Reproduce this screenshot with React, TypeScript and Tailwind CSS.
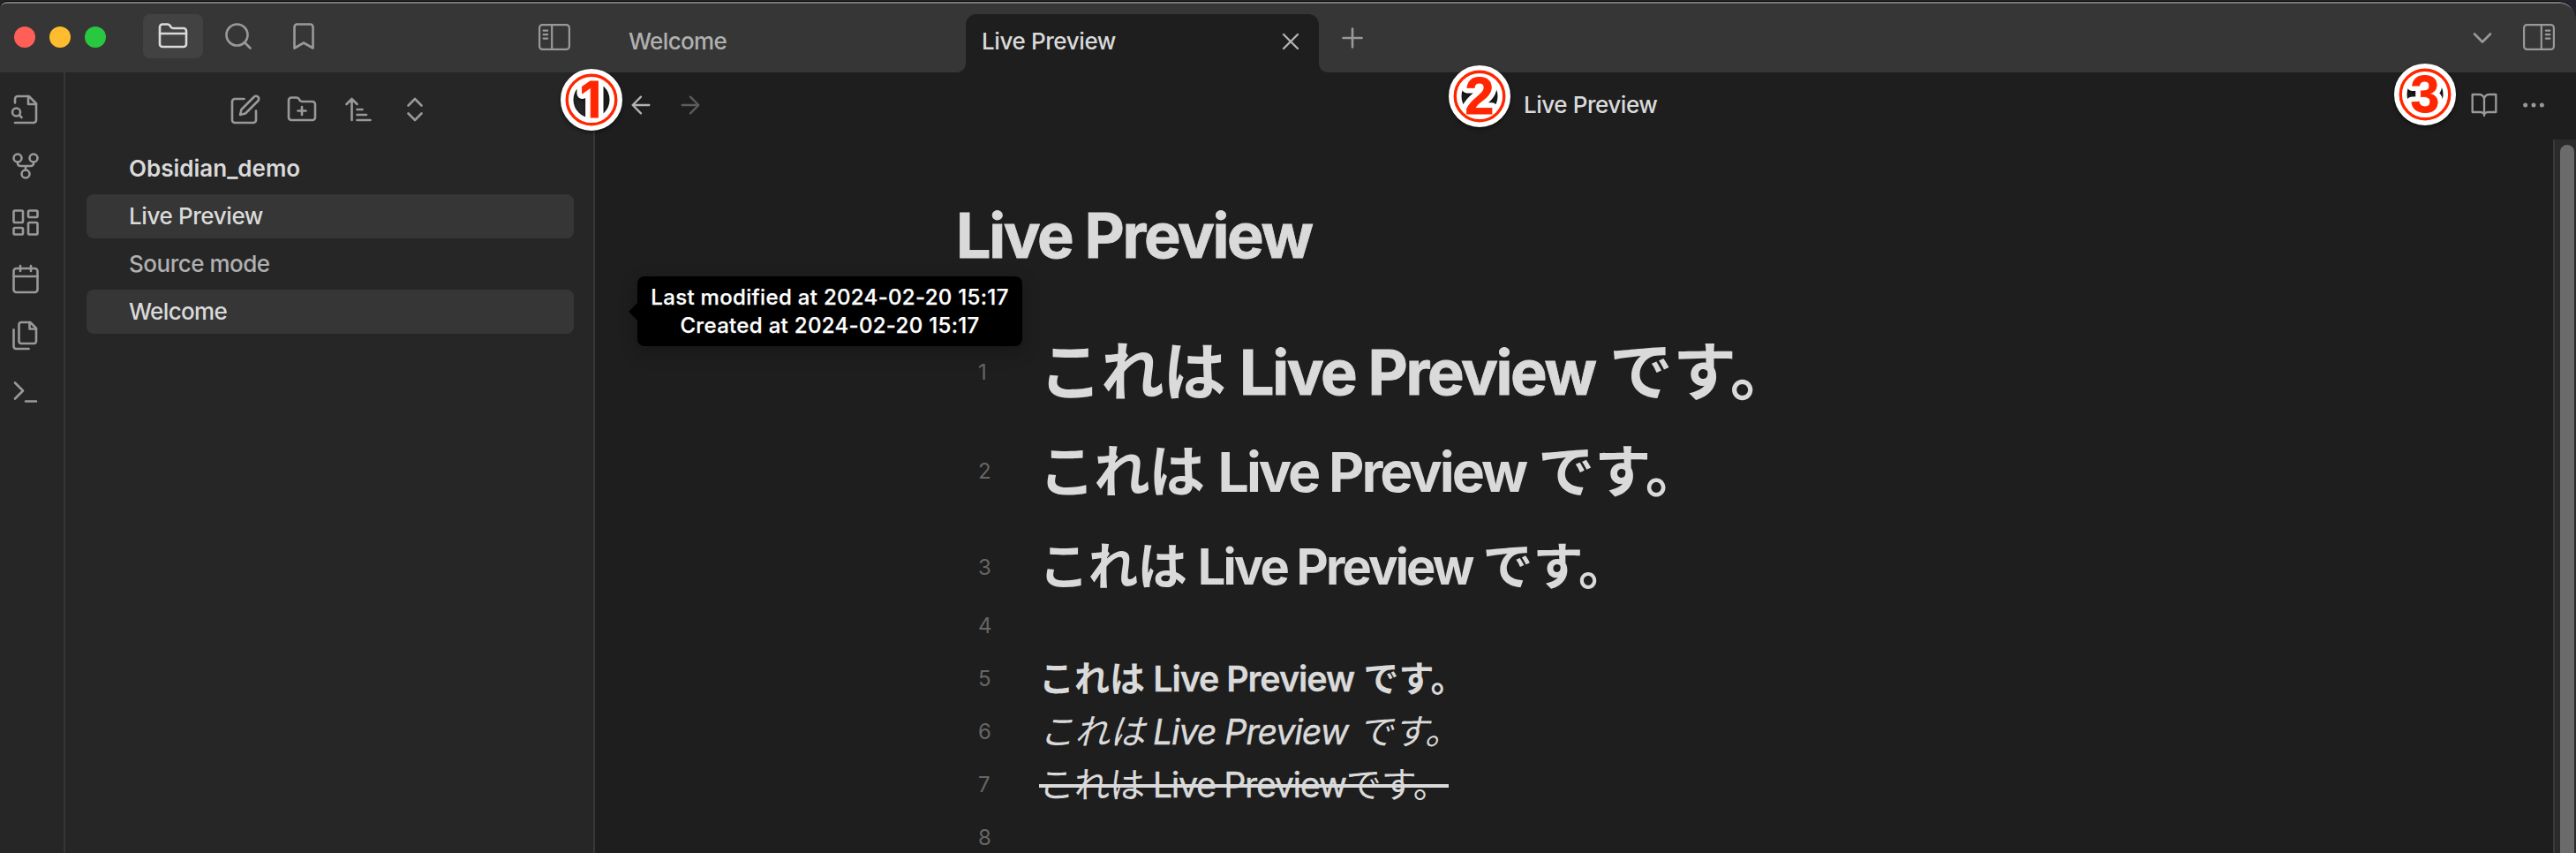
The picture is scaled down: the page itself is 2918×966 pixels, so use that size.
import React from "react";

type IconProps = { size?: number; className?: string; children: React.ReactNode };

function Icon({ size = 36, className = "", children }: IconProps) {
  return (
    <svg
      width={size}
      height={size}
      viewBox="0 0 24 24"
      fill="none"
      stroke="currentColor"
      strokeWidth={1.75}
      strokeLinecap="round"
      strokeLinejoin="round"
      className={`shrink-0 ${className}`}
    >
      {children}
    </svg>
  );
}

const folderPath =
  "M4 20h16a2 2 0 0 0 2-2V8a2 2 0 0 0-2-2h-7.93a2 2 0 0 1-1.66-.9l-.82-1.2A2 2 0 0 0 7.93 3H4a2 2 0 0 0-2 2v13c0 1.1.9 2 2 2Z";

function SidebarToggle({ flipped = false }: { flipped?: boolean }) {
  return (
    <svg
      width="36"
      height="30"
      viewBox="0 0 36 30"
      fill="none"
      stroke="currentColor"
      strokeWidth="2.2"
      strokeLinecap="round"
      className={flipped ? "shrink-0 -scale-x-100" : "shrink-0"}
    >
      <rect x="1.1" y="1.1" width="33.8" height="27.8" rx="3.4" />
      <path d="M15.2 1.5v27" strokeLinecap="butt" />
      <path d="M5.6 7.6h4.6M5.6 12.1h4.6M5.6 16.6h4.6" />
    </svg>
  );
}

function TopBar() {
  return (
    <header className="flex h-[78px] shrink-0 bg-[#363636] text-[#999999]">
      <div className="flex h-[74px] w-[674px] shrink-0 items-center pl-4">
        <div className="mt-[2px] flex gap-4">
          <span className="size-6 rounded-full bg-[#ff5f57]" />
          <span className="size-6 rounded-full bg-[#febc2e]" />
          <span className="size-6 rounded-full bg-[#28c840]" />
        </div>
        <div className="ml-[42px] flex gap-[6px]">
          <button className="flex h-[50px] w-[68px] items-center justify-center rounded-[8px] bg-[#424242] text-[#dadada]">
            <Icon>
              <path d={folderPath} />
              <path d="M2 10h20" />
            </Icon>
          </button>
          <button className="flex h-[50px] w-[68px] items-center justify-center">
            <Icon>
              <circle cx="11" cy="11" r="8" />
              <path d="m21 21-4.35-4.35" />
            </Icon>
          </button>
          <button className="flex h-[50px] w-[68px] items-center justify-center">
            <Icon>
              <path d="m19 21-7-4-7 4V5a2 2 0 0 1 2-2h10a2 2 0 0 1 2 2v16z" />
            </Icon>
          </button>
        </div>
        <div className="ml-[232px] mt-[2px]">
          <SidebarToggle />
        </div>
      </div>
      <div className="mt-3 flex h-[66px] w-[420px] shrink-0 items-center pb-[5px] pl-[38px] text-[26px] font-medium tracking-[-0.65px] text-[#b0b0b0]">
        Welcome
      </div>
      <div className="relative mt-3 flex h-[66px] w-[400px] shrink-0 items-center justify-between rounded-t-[12px] bg-[#1e1e1e] pb-[5px] pl-[18px] pr-4">
        <svg className="absolute -left-[10px] bottom-0" width="10" height="10" viewBox="0 0 10 10">
          <path d="M10 0v10H0A10 10 0 0 0 10 0z" fill="#1e1e1e" />
        </svg>
        <svg className="absolute -right-[10px] bottom-0" width="10" height="10" viewBox="0 0 10 10">
          <path d="M0 0v10h10A10 10 0 0 1 0 0z" fill="#1e1e1e" />
        </svg>
        <span className="text-[26px] font-medium tracking-[-0.4px] text-[#dadada]">Live Preview</span>
        <Icon size={32} className="text-[#b3b3b3]">
          <path d="M18 6 6 18M6 6l12 12" />
        </Icon>
      </div>
      <div className="flex h-[78px] flex-1 items-center pl-5 pr-6">
        <Icon>
          <path d="M5 12h14M12 5v14" />
        </Icon>
        <Icon className="ml-auto">
          <path d="m6 9 6 6 6-6" />
        </Icon>
        <div className="-mt-[2px] ml-7">
          <SidebarToggle flipped />
        </div>
      </div>
    </header>
  );
}

function Ribbon() {
  return (
    <nav className="flex w-[74px] shrink-0 flex-col gap-7 border-r-2 border-[#363636] bg-[#262626] pl-[11px] pt-6 text-[#999999]">
      <Icon>
        <path d="M4 22h14a2 2 0 0 0 2-2V7.5L14.5 2H6a2 2 0 0 0-2 2v3" />
        <path d="M14 2v6h6" />
        <circle cx="5" cy="14" r="3" />
        <path d="m9 18-1.5-1.5" />
      </Icon>
      <Icon>
        <circle cx="12" cy="18" r="3" />
        <circle cx="6" cy="6" r="3" />
        <circle cx="18" cy="6" r="3" />
        <path d="M18 9v1a2 2 0 0 1-2 2H8a2 2 0 0 1-2-2V9M12 12v3" />
      </Icon>
      <Icon>
        <rect x="3" y="3" width="7" height="9" rx="1" />
        <rect x="14" y="3" width="7" height="5" rx="1" />
        <rect x="14" y="12" width="7" height="9" rx="1" />
        <rect x="3" y="16" width="7" height="5" rx="1" />
      </Icon>
      <Icon>
        <rect x="3" y="4" width="18" height="18" rx="2" />
        <path d="M16 2v4M8 2v4M3 10h18" />
      </Icon>
      <Icon>
        <path d="M15.5 2H8.6c-.4 0-.8.2-1.1.5-.3.3-.5.7-.5 1.1v12.8c0 .4.2.8.5 1.1.3.3.7.5 1.1.5h9.8c.4 0 .8-.2 1.1-.5.3-.3.5-.7.5-1.1V6.5L15.5 2z" />
        <path d="M3 7.6v12.8c0 .4.2.8.5 1.1.3.3.7.5 1.1.5h9.8M15 2v5h5" />
      </Icon>
      <Icon>
        <path d="m4 17 6-6-6-6M12 19h8" />
      </Icon>
    </nav>
  );
}

function FileExplorer() {
  return (
    <aside className="flex w-[600px] shrink-0 flex-col border-r-2 border-[#363636] bg-[#262626]">
      <div className="flex h-[84px] gap-7 pl-[186px] pt-6 text-[#999999]">
        <Icon>
          <path d="M11 4H4a2 2 0 0 0-2 2v14a2 2 0 0 0 2 2h14a2 2 0 0 0 2-2v-7" />
          <path d="M18.5 2.5a2.121 2.121 0 0 1 3 3L12 15l-4 1 1-4 9.5-9.5z" />
        </Icon>
        <Icon>
          <path d={folderPath} />
          <path d="M12 10v6M9 13h6" />
        </Icon>
        <Icon>
          <path d="m3 8 4-4 4 4M7 4v16M11 12h4M11 16h7M11 20h10" />
        </Icon>
        <Icon>
          <path d="m7 15 5 5 5-5M7 9l5-5 5 5" />
        </Icon>
      </div>
      <div className="ml-6 flex w-[552px] flex-col gap-1 text-[26px] font-medium leading-[50px] tracking-[-0.4px] text-[#dadada]">
        <div className="h-[50px] pl-12 font-semibold tracking-normal">Obsidian_demo</div>
        <div className="h-[50px] rounded-[8px] bg-[#363636] pl-12">Live Preview</div>
        <div className="h-[50px] pl-12 tracking-[-0.5px] text-[#b0b0b0]">Source mode</div>
        <div className="h-[50px] rounded-[8px] bg-[#363636] pl-12 tracking-[-0.65px]">Welcome</div>
      </div>
    </aside>
  );
}

const cjk = "inline-block whitespace-pre leading-none font-['Noto_Sans_CJK_JP',sans-serif]";
const latin = "inline-block whitespace-pre leading-none";

function LineNumber({ children }: { children: React.ReactNode }) {
  return (
    <span className="ml-[434px] w-[69px] shrink-0 text-[24px] leading-[30px] text-[#666666]">{children}</span>
  );
}

function Editor() {
  return (
    <div className="flex min-h-0 flex-1">
      <div className="flex flex-1 flex-col overflow-hidden pt-[66px] text-[#dadada]">
        <h1 className="ml-[409px] text-[70px] font-bold leading-[86px] tracking-[-2.4px] [-webkit-text-stroke:0.8px]">
          Live Preview
        </h1>
        <div className="mt-[69px] flex h-[85px] shrink-0 items-center">
          <LineNumber>1</LineNumber>
          <div className="whitespace-nowrap text-[70px] font-bold leading-[85px]">
            <span className={`${cjk} w-[227px] text-[71.5px] tracking-[-1.2px]`}>{"これは "}</span>
            <span className={`${latin} w-[419px] tracking-[-2.4px] [-webkit-text-stroke:0.8px]`}>{"Live Preview "}</span>
            <span className={`${cjk} text-[72px]`}>です。</span>
          </div>
        </div>
        <div className="flex h-[140px] shrink-0 items-center">
          <LineNumber>2</LineNumber>
          <div className="whitespace-nowrap text-[62.5px] font-bold leading-[140px]">
            <span className={`${cjk} w-[202.6px] text-[63.5px] tracking-[-1.2px]`}>{"これは "}</span>
            <span className={`${latin} w-[362.6px] tracking-[-3.05px]`}>{"Live Preview "}</span>
            <span className={`${cjk} text-[64px]`}>です。</span>
          </div>
        </div>
        <div className="flex h-[77px] shrink-0 items-center">
          <LineNumber>3</LineNumber>
          <div className="whitespace-nowrap text-[56px] font-bold leading-[77px]">
            <span className={`${cjk} w-[179.7px] text-[56.5px] tracking-[-0.8px]`}>{"これは "}</span>
            <span className={`${latin} w-[322.9px] tracking-[-2.85px]`}>{"Live Preview "}</span>
            <span className={`${cjk} text-[57px]`}>です。</span>
          </div>
        </div>
        <div className="-mt-[2px] flex h-[60px] shrink-0 items-center">
          <LineNumber>4</LineNumber>
        </div>
        <div className="flex h-[60px] shrink-0 items-center">
          <LineNumber>5</LineNumber>
          <div className="whitespace-nowrap text-[39.5px] font-semibold leading-[60px]">
            <span className={`${cjk} w-[129.2px] text-[40px] font-bold`}>{"これは "}</span>
            <span className={`${latin} w-[238.4px] tracking-[-1.08px] [-webkit-text-stroke:0.3px]`}>{"Live Preview "}</span>
            <span className={`${cjk} text-[40px] font-bold`}>です。</span>
          </div>
        </div>
        <div className="flex h-[60px] shrink-0 items-center">
          <LineNumber>6</LineNumber>
          <div className="whitespace-nowrap text-[39.5px] italic leading-[60px]">
            <span className={`${cjk} w-[128.9px] text-[40px]`}>{"これは "}</span>
            <span className={`${latin} w-[232px] tracking-[-1.15px] [-webkit-text-stroke:0.4px]`}>{"Live Preview "}</span>
            <span className={`${cjk} text-[40px]`}>です。</span>
          </div>
        </div>
        <div className="flex h-[60px] shrink-0 items-center">
          <LineNumber>7</LineNumber>
          <div className="relative w-[464px] whitespace-nowrap text-[39.5px] leading-[60px]">
            <span className={`${cjk} w-[128.8px] text-[40px]`}>{"これは "}</span>
            <span className={`${latin} w-[219px] tracking-[-1.4px] [-webkit-text-stroke:0.4px]`}>Live Preview</span>
            <span className={`${cjk} text-[40px]`}>です。</span>
            <span className="absolute left-0 top-[29px] h-1 w-full bg-[#dadada]" />
          </div>
        </div>
        <div className="flex h-[60px] shrink-0 items-center">
          <LineNumber>8</LineNumber>
        </div>
      </div>
      <div className="w-[26px] shrink-0 border-l-2 border-[#3a3a3a] bg-[#2b2b2b] pl-[6px] pt-[6px]">
        <div className="h-[900px] w-4 rounded-full bg-[#6b6b6b]" />
      </div>
    </div>
  );
}

function Badge({ children, className, x, y, font }: { children: string; className: string; x: number; y: number; font: string }) {
  return (
    <svg
      width="70"
      height="70"
      viewBox="0 0 70 70"
      fill="none"
      className={`absolute overflow-visible drop-shadow-[0_2px_2px_rgba(0,0,0,0.5)] ${className}`}
    >
      <circle cx="35" cy="35" r="27.75" stroke="#ffffff" strokeWidth="14.5" />
      <text x={x} y={y} textAnchor="middle" stroke="#ffffff" strokeWidth="12" strokeLinejoin="round" className={font}>
        {children}
      </text>
      <circle cx="35" cy="35" r="27.75" stroke="#ff2600" strokeWidth="3.4" />
      <text x={x} y={y} textAnchor="middle" fill="#ff2600" stroke="#ff2600" strokeWidth="0.8" aria-hidden="true" className={font}>
        {children}
      </text>
    </svg>
  );
}

function Tooltip() {
  return (
    <div className="absolute left-[722px] top-[313px] h-[79px] w-[436px] rounded-[8px] bg-black pt-2 text-center text-[24px] font-medium leading-8 tracking-[0.32px] text-white shadow-[0_6px_20px_rgba(0,0,0,0.25)] [-webkit-text-stroke:0.25px]">
      <svg className="absolute -left-[10px] top-[30px]" width="10" height="20" viewBox="0 0 10 20">
        <path d="M10 0v20L0 10z" fill="#000000" />
      </svg>
      <p>Last modified at 2024-02-20 15:17</p>
      <p>Created at 2024-02-20 15:17</p>
    </div>
  );
}

export default function App() {
  return (
    <div className="relative h-[966px] w-[2918px] overflow-hidden bg-[#23232f] font-['Inter','Noto_Sans_CJK_JP',sans-serif]">
      <div className="h-px" />
      <div className="flex h-[965px] flex-col overflow-hidden rounded-tl-[8px] rounded-tr-[22px] bg-black pt-px">
        <div className="flex flex-1 flex-col overflow-hidden rounded-tl-[8px] rounded-tr-[20px] border-t-2 border-[#7b7b76] bg-[#363636]">
          <TopBar />
          <div className="flex min-h-0 flex-1">
            <Ribbon />
            <FileExplorer />
            <main className="flex min-w-0 flex-1 flex-col bg-[#1e1e1e]">
              <div className="mb-[2px] flex h-[74px] shrink-0 items-center pl-9 pr-8 text-[#999999]">
                <Icon size={32} className="text-[#b3b3b3]">
                  <path d="m12 19-7-7 7-7M19 12H5" />
                </Icon>
                <Icon size={32} className="ml-6 text-[#5c5c5c]">
                  <path d="M5 12h14M12 5l7 7-7 7" />
                </Icon>
                <span className="ml-[928px] pb-[2px] text-[26px] font-medium tracking-[-0.45px] text-[#dadada]">Live Preview</span>
                <Icon size={32} className="ml-auto">
                  <path d="M2 3h6a4 4 0 0 1 4 4v14a3 3 0 0 0-3-3H2zM22 3h-6a4 4 0 0 0-4 4v14a3 3 0 0 1 3-3h7z" />
                </Icon>
                <Icon size={32} className="ml-6">
                  <circle cx="12" cy="12" r="1" />
                  <circle cx="19" cy="12" r="1" />
                  <circle cx="5" cy="12" r="1" />
                </Icon>
              </div>
              <Editor />
            </main>
          </div>
        </div>
      </div>
      <Tooltip />
      <Badge className="left-[635px] top-[78px]" x={34} y={55} font="font-['Inter'] text-[56px] font-bold">
        1
      </Badge>
      <Badge className="left-[1641px] top-[74px]" x={35} y={55} font="font-['Liberation_Sans'] text-[59px] font-bold">
        2
      </Badge>
      <Badge className="left-[2712px] top-[72px]" x={35} y={55} font="font-['Liberation_Sans'] text-[59px] font-bold">
        3
      </Badge>
    </div>
  );
}
